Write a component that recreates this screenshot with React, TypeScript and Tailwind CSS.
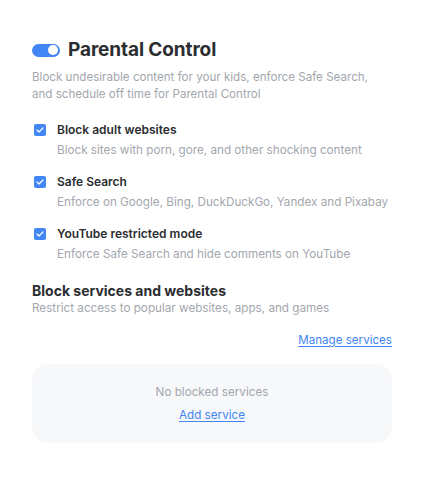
import { ReactNode } from 'react';

type OptionProps = {
  title: string;
  children: ReactNode;
};

function Option({ title, children }: OptionProps) {
  return (
    <div className="flex gap-[11px]">
      <div className="mt-[4px] w-[12px] h-[12px] rounded-[2px] bg-[#4285f4] flex items-center justify-center shrink-0">
        <svg width="8" height="6" viewBox="0 0 8 6" fill="none">
          <path d="M1 3l2 2 4-4" stroke="white" strokeWidth="1.2" strokeLinecap="round" strokeLinejoin="round" />
        </svg>
      </div>
      <div className="flex flex-col">
        <span className="text-[12px] leading-[20px] font-semibold text-[#2b2d31]">{title}</span>
        <span className="text-[11.7px] leading-[20px] text-[#a3a7ae] whitespace-nowrap">{children}</span>
      </div>
    </div>
  );
}

export default function App() {
  return (
    <div className="bg-white w-[426px] h-[482px] pl-8 pr-[34px] pt-[38px] font-['Inter',sans-serif]">
      <div className="flex items-center gap-2 h-[24px]">
        <div className="w-[28px] h-[13px] rounded-full bg-[#4285f4] flex items-center justify-end pr-[2px]">
          <div className="w-[10px] h-[10px] rounded-full bg-white" />
        </div>
        <h1 className="text-[19px] font-bold text-[#2b2d31] tracking-[-0.1px]">Parental Control</h1>
      </div>
      <p className="mt-[7px] text-[11.6px] leading-[17px] text-[#a3a7ae] whitespace-nowrap">
        Block undesirable content for your kids, enforce Safe Search,
        <br />
        and schedule off time for Parental Control
      </p>
      <div className="mt-[17px] flex flex-col gap-[12px] pl-[2px]">
        <Option title="Block adult websites">Block sites with porn, gore, and other shocking content</Option>
        <Option title="Safe Search">Enforce on Google, Bing, DuckDuckGo, Yandex and Pixabay</Option>
        <Option title="YouTube restricted mode">Enforce Safe Search and hide comments on YouTube</Option>
      </div>
      <h2 className="mt-[17px] text-[14px] leading-[20px] font-bold text-[#2b2d31]">Block services and websites</h2>
      <p className="mt-[-1px] text-[11.7px] leading-[16px] text-[#a3a7ae]">Restrict access to popular websites, apps, and games</p>
      <div className="flex justify-end mt-[16px]">
        <a href="#" className="text-[11.6px] leading-[16px] text-[#4285f4] underline underline-offset-2">Manage services</a>
      </div>
      <div className="mt-[16px] h-[79px] rounded-[16px] bg-[#f7f8fa] flex flex-col items-center justify-center gap-[7px]">
        <span className="text-[11.7px] leading-[16px] text-[#a3a7ae]">No blocked services</span>
        <a href="#" className="text-[11.7px] leading-[16px] text-[#4285f4] underline underline-offset-2">Add service</a>
      </div>
    </div>
  );
}
